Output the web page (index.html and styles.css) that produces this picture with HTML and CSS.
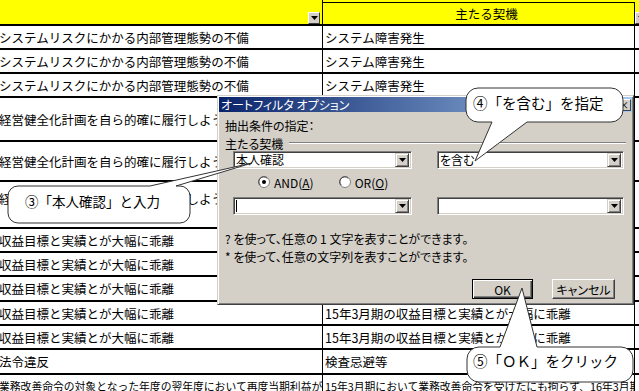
FILE: index.html
```html
<!DOCTYPE html>
<html lang="ja">
<head>
  <meta charset="UTF-8">
  <title>オートフィルタ オプション</title>
  <link rel="stylesheet" href="styles.css">
</head>
<body>
  <div class="sheet">
    <div class="row head">
      <div class="cell c1"><span class="dd"><svg width="7" height="4" viewBox="0 0 7 4"><path d="M0 0H7L3.5 4Z"/></svg></span></div>
      <div class="cell c2 head-title">主たる契機</div>
      <div class="cell c3"><span class="dd dd-left"><svg width="7" height="4" viewBox="0 0 7 4"><path d="M0 0H7L3.5 4Z"/></svg></span></div>
    </div>
    <div class="row h24"><div class="cell c1">システムリスクにかかる内部管理態勢の不備</div><div class="cell c2">システム障害発生</div><div class="cell c3"></div></div>
    <div class="row h24"><div class="cell c1">システムリスクにかかる内部管理態勢の不備</div><div class="cell c2">システム障害発生</div><div class="cell c3"></div></div>
    <div class="row h24"><div class="cell c1">システムリスクにかかる内部管理態勢の不備</div><div class="cell c2">システム障害発生</div><div class="cell c3"></div></div>
    <div class="row h44"><div class="cell c1">経営健全化計画を自ら的確に履行しようとしない</div><div class="cell c2">本人確認</div><div class="cell c3"></div></div>
    <div class="row h40"><div class="cell c1">経営健全化計画を自ら的確に履行しようとしない</div><div class="cell c2">本人確認</div><div class="cell c3"></div></div>
    <div class="row h47"><div class="cell c1 top">経営健全化計画を自ら的確に履行しようとしない</div><div class="cell c2">本人確認</div><div class="cell c3"></div></div>
    <div class="row h24"><div class="cell c1">収益目標と実績とが大幅に乖離</div><div class="cell c2">15年3月期の収益目標と実績とが大幅に乖離</div><div class="cell c3"></div></div>
    <div class="row h24"><div class="cell c1">収益目標と実績とが大幅に乖離</div><div class="cell c2">15年3月期の収益目標と実績とが大幅に乖離</div><div class="cell c3"></div></div>
    <div class="row h25"><div class="cell c1">収益目標と実績とが大幅に乖離</div><div class="cell c2">15年3月期の収益目標と実績とが大幅に乖離</div><div class="cell c3"></div></div>
    <div class="row h24"><div class="cell c1">収益目標と実績とが大幅に乖離</div><div class="cell c2">15年3月期の収益目標と実績とが大幅に乖離</div><div class="cell c3"></div></div>
    <div class="row h24"><div class="cell c1">収益目標と実績とが大幅に乖離</div><div class="cell c2">15年3月期の収益目標と実績とが大幅に乖離</div><div class="cell c3"></div></div>
    <div class="row h25"><div class="cell c1">法令違反</div><div class="cell c2">検査忌避等</div><div class="cell c3"></div></div>
    <div class="row h24 small"><div class="cell c1">業務改善命令の対象となった年度の翌年度において再度当期利益が</div><div class="cell c2">15年3月期において業務改善命令を受けたにも拘らず、16年3月期の</div><div class="cell c3"></div></div>
  </div>

  <div class="dialog">
    <div class="titlebar">
      <span>オートフィルタ オプション</span>
      <span class="close">×</span>
    </div>
    <div class="dbody">
      <div class="label first">抽出条件の指定：</div>
      <div class="group"><span>主たる契機</span><span class="groove"></span></div>
      <div class="combos">
        <div class="combo w1"><span class="combo-text">本人確認</span><span class="combo-btn"><svg width="7" height="4" viewBox="0 0 7 4"><path d="M0 0H7L3.5 4Z"/></svg></span></div>
        <div class="combo w2"><span class="combo-text">を含む</span><span class="combo-btn"><svg width="7" height="4" viewBox="0 0 7 4"><path d="M0 0H7L3.5 4Z"/></svg></span></div>
      </div>
      <div class="radios">
        <label class="radio and">
          <svg width="12" height="12" viewBox="0 0 12 12"><circle cx="6" cy="6" r="5.5" fill="#fff" stroke="#808080"/><path d="M2.3 9.2A4.6 4.6 0 0 1 9.2 2.3" fill="none" stroke="#404040"/><circle cx="6" cy="6" r="2" fill="#000"/></svg>
          <span>AND(<u>A</u>)</span>
        </label>
        <label class="radio or">
          <svg width="12" height="12" viewBox="0 0 12 12"><circle cx="6" cy="6" r="5.5" fill="#fff" stroke="#808080"/><path d="M2.3 9.2A4.6 4.6 0 0 1 9.2 2.3" fill="none" stroke="#404040"/></svg>
          <span>OR(<u>O</u>)</span>
        </label>
      </div>
      <div class="combos second">
        <div class="combo w1"><span class="combo-text"><span class="caret"></span></span><span class="combo-btn"><svg width="7" height="4" viewBox="0 0 7 4"><path d="M0 0H7L3.5 4Z"/></svg></span></div>
        <div class="combo w2"><span class="combo-text"></span><span class="combo-btn"><svg width="7" height="4" viewBox="0 0 7 4"><path d="M0 0H7L3.5 4Z"/></svg></span></div>
      </div>
      <div class="hints">
        <div>? を使って、任意の 1 文字を表すことができます。</div>
        <div>* を使って、任意の文字列を表すことができます。</div>
      </div>
      <div class="buttons">
        <span class="btn default">OK</span>
        <span class="btn cancel">キャンセル</span>
      </div>
    </div>
  </div>

  <svg class="bubbles" width="639" height="391" viewBox="0 0 639 391">
    <path d="M18 186H150L252 163L176 186H180A10 10 0 0 1 190 196V213A10 10 0 0 1 180 223H18A10 10 0 0 1 8 213V196A10 10 0 0 1 18 186Z"/>
    <path d="M478 88H611A12 12 0 0 1 623 100V110A12 12 0 0 1 611 122H527L475 161L492 122H478A12 12 0 0 1 466 110V100A12 12 0 0 1 478 88Z"/>
    <path d="M479 347H500L522 288L537 347H621A12 12 0 0 1 633 359V370A12 12 0 0 1 621 382H479A12 12 0 0 1 467 370V359A12 12 0 0 1 479 347Z"/>
  </svg>
  <div class="note note-3">③「本人確認」と入力</div>
  <div class="note note-4">④「を含む」を指定</div>
  <div class="note note-5">⑤「ＯＫ」をクリック</div>
</body>
</html>
```

FILE: styles.css
```css
body {
    margin: 0;
    width: 639px;
    height: 391px;
    overflow: hidden;
    position: relative;
    background: #ffffff;
    color: #000000;
    font-family: "Noto Sans CJK JP", sans-serif;
}

/* sheet */
.sheet {
    display: flex;
    flex-direction: column;
}

.row {
    display: flex;
    box-sizing: border-box;
    border-bottom: 2px solid #000000;
    flex-shrink: 0;
}

.head { height: 26px; background: #ffff00; }
.h24 { height: 24px; }
.h25 { height: 25px; }
.h40 { height: 40px; }
.h44 { height: 44px; }
.h47 { height: 47px; }

.cell {
    box-sizing: border-box;
    display: flex;
    align-items: center;
    overflow: hidden;
    white-space: nowrap;
    font-size: 12.5px;
    position: relative;
}

.cell.top {
    align-items: flex-start;
    padding-top: 7px;
}

.small .cell {
    font-size: 10.8px;
}

.c1 {
    width: 323px;
    border-right: 1px solid #000000;
    text-indent: -1px;
}

.c2 {
    width: 312px;
    border-right: 1px solid #000000;
    padding-left: 2px;
}

.c3 {
    flex: 1;
    padding-left: 2px;
}

.head .c2 {
    margin-top: 2px;
    border-top: 1px solid #000000;
}

.head-title {
    justify-content: center;
    padding-left: 16px;
}

.dd {
    position: absolute;
    right: 2px;
    bottom: 0;
    width: 12px;
    height: 12px;
    box-sizing: border-box;
    background: #d4d0c8;
    border: 1px solid;
    border-color: #ffffff #404040 #404040 #ffffff;
    display: flex;
    align-items: center;
    justify-content: center;
}

.dd-left {
    left: 0;
    right: auto;
}

/* dialog */
.dialog {
    position: absolute;
    left: 217px;
    top: 95px;
    width: 417px;
    height: 210px;
    box-sizing: border-box;
    padding: 1px;
    background: #d4d0c8;
    border: 1px solid;
    border-color: #d4d0c8 #404040 #404040 #d4d0c8;
    box-shadow: inset 1px 1px #ffffff, inset -1px -1px #808080;
    font-size: 12px;
    font-feature-settings: "palt";
}

.titlebar {
    height: 15px;
    display: flex;
    align-items: center;
    justify-content: space-between;
    padding: 0 1px 0 2px;
    background: linear-gradient(to right, #0a246a, #a6caf0);
    color: #ffffff;
    font-size: 12px;
    line-height: 15px;
}

.close {
    width: 14px;
    height: 12px;
    box-sizing: border-box;
    background: #d4d0c8;
    border: 1px solid;
    border-color: #ffffff #404040 #404040 #ffffff;
    color: #000000;
    font-size: 10px;
    line-height: 10px;
    text-align: center;
}

.dbody {
    padding: 0 6px;
}

.label {
    line-height: 14px;
}

.label.first {
    margin-top: 7px;
}

.group {
    margin-top: 3px;
    height: 14px;
    display: flex;
    align-items: center;
}

.groove {
    flex: 1;
    margin-left: 6px;
    border-top: 1px solid #808080;
    border-bottom: 1px solid #ffffff;
}

.combos {
    margin-top: 1px;
    padding-left: 8px;
    display: flex;
    gap: 25px;
}

.combos.second {
    margin-top: 8px;
}

.combo {
    height: 18px;
    box-sizing: border-box;
    padding: 1px 2px 1px 2px;
    background: #ffffff;
    border: 1px solid;
    border-color: #808080 #ffffff #ffffff #808080;
    box-shadow: inset 1px 1px #404040, inset -1px -1px #d4d0c8;
    display: flex;
    align-items: center;
}

.w1 { width: 179px; }
.w2 { width: 187px; }

.combo-text {
    flex: 1;
    line-height: 14px;
    display: flex;
    align-items: center;
}

.caret {
    width: 1px;
    height: 12px;
    background: #000000;
}

.combo-btn {
    width: 14px;
    height: 14px;
    box-sizing: border-box;
    background: #d4d0c8;
    border: 1px solid;
    border-color: #d4d0c8 #404040 #404040 #d4d0c8;
    box-shadow: inset 1px 1px #ffffff, inset -1px -1px #808080;
    display: flex;
    align-items: center;
    justify-content: center;
}

.radios {
    margin-top: 6px;
    height: 14px;
    display: flex;
    align-items: center;
    padding-left: 33px;
}

.radio {
    display: flex;
    align-items: center;
    gap: 4px;
}

.radio.or {
    margin-left: 25px;
}

.hints {
    margin-top: 15px;
    line-height: 18px;
}

.buttons {
    margin-top: 13px;
    display: flex;
    justify-content: flex-end;
    gap: 19px;
    padding-right: 11px;
}

.btn {
    height: 20px;
    box-sizing: border-box;
    background: #d4d0c8;
    border: 1px solid;
    border-color: #ffffff #404040 #404040 #ffffff;
    box-shadow: inset -1px -1px #808080;
    display: flex;
    align-items: center;
    justify-content: center;
    width: 63px;
}

.btn.default {
    width: 61px;
    border-color: #000000;
    box-shadow: inset 1px 1px #ffffff, inset -1px -1px #404040, inset -2px -2px #808080;
}

/* callouts */
.bubbles {
    position: absolute;
    left: 0;
    top: 0;
}

.bubbles path {
    fill: #ffffff;
    stroke: #333333;
    stroke-width: 1;
}

.note {
    position: absolute;
    line-height: 20px;
    white-space: nowrap;
    font-size: 14.5px;
}

.note-3 {
    left: 25px;
    top: 191px;
    font-size: 13.5px;
}

.note-4 {
    left: 473px;
    top: 93px;
}

.note-5 {
    left: 473px;
    top: 351px;
}
```
